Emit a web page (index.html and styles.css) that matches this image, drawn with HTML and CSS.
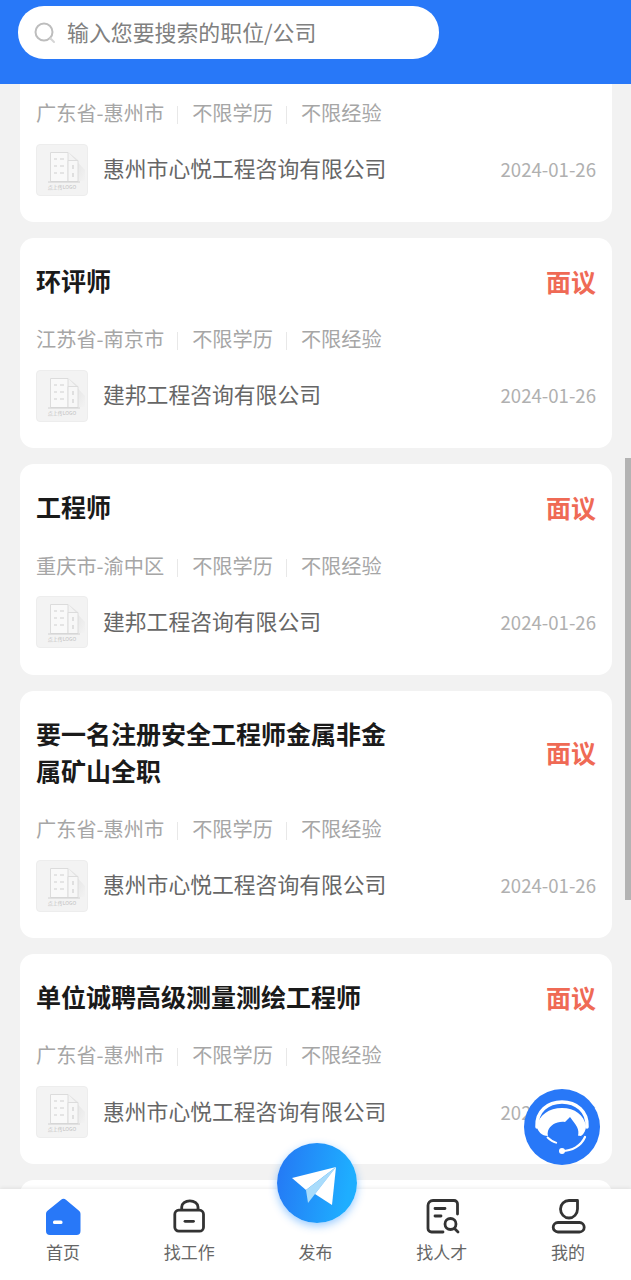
FILE: index.html
```html
<!DOCTYPE html>
<html lang="zh-CN">
<head>
    <meta charset="UTF-8">
    <meta name="viewport" content="width=device-width, initial-scale=1.0">
    <title>招聘</title>
    <link rel="stylesheet" href="styles.css">
</head>
<body>
    <svg class="defs" width="0" height="0">
        <defs>
            <linearGradient id="logo-shade" x1="0" y1="0" x2="1" y2="1">
                <stop offset="0" stop-color="#dcdcdc"/>
                <stop offset="1" stop-color="#f3f3f3"/>
            </linearGradient>
        </defs>
        <symbol id="logo" viewBox="0 0 52 52">
            <path d="M32 8l17 18v11H42V16l-10-8z" fill="url(#logo-shade)"/>
            <path d="M14.500 8.500h17.500v29H14.500z" fill="#f9f9f9" stroke="#dcdcdc"/>
            <path d="M32 16.500h10v21H32z" fill="#f7f7f7" stroke="#dcdcdc"/>
            <path d="M18 15h3M24 15h4M18 22h3M24 22h4M18 29h3M24 29h4M37 21v4M37 29v4" stroke="#cfcfcf" stroke-width="1.200"/>
            <path d="M12 38h32" stroke="#d0d0d0"/>
        </symbol>
    </svg>

    <header class="header">
        <div class="search">
            <svg class="search-icon" width="22" height="22" viewBox="0 0 22 22"><circle cx="10" cy="10" r="8.500" fill="none" stroke="#bdbdbd" stroke-width="2"/><path d="M16.500 16.500l3.500 3.500" stroke="#d5d5d5" stroke-width="2" stroke-linecap="round"/></svg>
            <span class="search-text">输入您要搜索的职位/公司</span>
        </div>
    </header>

    <main class="list">
        <div class="card card-cut">
            <div class="meta"><span>广东省-惠州市</span><span>不限学历</span><span>不限经验</span></div>
            <div class="company">
                <div class="logo"><svg width="50" height="50"><use href="#logo" x="-1" y="-1" width="52" height="52"/></svg><span class="logo-text">点上传LOGO</span></div>
                <span class="company-name">惠州市心悦工程咨询有限公司</span>
                <span class="date">2024-01-26</span>
            </div>
        </div>
        <div class="card">
            <div class="card-top"><h3>环评师</h3><span class="salary">面议</span></div>
            <div class="meta"><span>江苏省-南京市</span><span>不限学历</span><span>不限经验</span></div>
            <div class="company">
                <div class="logo"><svg width="50" height="50"><use href="#logo" x="-1" y="-1" width="52" height="52"/></svg><span class="logo-text">点上传LOGO</span></div>
                <span class="company-name">建邦工程咨询有限公司</span>
                <span class="date">2024-01-26</span>
            </div>
        </div>
        <div class="card">
            <div class="card-top"><h3>工程师</h3><span class="salary">面议</span></div>
            <div class="meta"><span>重庆市-渝中区</span><span>不限学历</span><span>不限经验</span></div>
            <div class="company">
                <div class="logo"><svg width="50" height="50"><use href="#logo" x="-1" y="-1" width="52" height="52"/></svg><span class="logo-text">点上传LOGO</span></div>
                <span class="company-name">建邦工程咨询有限公司</span>
                <span class="date">2024-01-26</span>
            </div>
        </div>
        <div class="card">
            <div class="card-top"><h3>要一名注册安全工程师金属非金属矿山全职</h3><span class="salary">面议</span></div>
            <div class="meta"><span>广东省-惠州市</span><span>不限学历</span><span>不限经验</span></div>
            <div class="company">
                <div class="logo"><svg width="50" height="50"><use href="#logo" x="-1" y="-1" width="52" height="52"/></svg><span class="logo-text">点上传LOGO</span></div>
                <span class="company-name">惠州市心悦工程咨询有限公司</span>
                <span class="date">2024-01-26</span>
            </div>
        </div>
        <div class="card">
            <div class="card-top"><h3>单位诚聘高级测量测绘工程师</h3><span class="salary">面议</span></div>
            <div class="meta"><span>广东省-惠州市</span><span>不限学历</span><span>不限经验</span></div>
            <div class="company">
                <div class="logo"><svg width="50" height="50"><use href="#logo" x="-1" y="-1" width="52" height="52"/></svg><span class="logo-text">点上传LOGO</span></div>
                <span class="company-name">惠州市心悦工程咨询有限公司</span>
                <span class="date">2024-01-26</span>
            </div>
        </div>
        <div class="card"></div>
    </main>

    <nav class="tabbar">
        <div class="tab">
            <svg width="36" height="36" viewBox="0 0 36 36"><path d="M15.800 2a3.800 3.800 0 0 1 5.400 0L34 12.800a4 4 0 0 1 1.500 3V33a4 4 0 0 1-4 4H5a4 4 0 0 1-4-4V15.800a4 4 0 0 1 1.500-3z" fill="#2878f8"/><rect x="8" y="22.500" width="9.500" height="3.500" rx="1.500" fill="#fff"/></svg>
            <span>首页</span>
        </div>
        <div class="tab">
            <svg width="36" height="36" viewBox="0 0 36 36" fill="none" stroke="#333" stroke-width="2.800"><rect x="3.800" y="12.200" width="28.700" height="21" rx="4"/><path d="M10.700 12V9a8.150 6.200 0 0 1 16.300 0V12"/><path d="M14 23.300h8.500" stroke-linecap="round"/></svg>
            <span>找工作</span>
        </div>
        <div class="tab">
            <div class="tab-blank"></div>
            <span>发布</span>
        </div>
        <div class="tab">
            <svg width="36" height="36" viewBox="0 0 36 36" fill="none" stroke="#333" stroke-width="2.800" stroke-linecap="round"><path d="M33.500 16V6a3.500 3.500 0 0 0-3.500-3.500H9A5 5 0 0 0 4 7.500v23A3.500 3.500 0 0 0 7.500 34H19"/><path d="M11 10.500h10M11 18h6"/><circle cx="26.500" cy="26" r="5.500"/><path d="M31 31l3 3"/></svg>
            <span>找人才</span>
        </div>
        <div class="tab">
            <svg width="36" height="36" viewBox="0 0 36 36" fill="none" stroke="#333" stroke-width="2.800"><path d="M19 2.500h8.500V11a8.500 9 0 0 1-17 0A8.500 8.500 0 0 1 19 2.500z" stroke-linejoin="round"/><rect x="3.200" y="24.500" width="31" height="9.500" rx="4.750"/></svg>
            <span>我的</span>
        </div>
    </nav>

    <div class="publish">
        <svg width="50" height="50" viewBox="0 0 50 50"><path d="M0 20L44 9 14 32z" fill="#fff"/><path d="M44 9L14 32l2 13 7-9z" fill="#a9dcfb"/><path d="M44 9L40 47 23 36z" fill="#fff"/></svg>
    </div>

    <div class="service">
        <svg width="62" height="62" viewBox="0 0 62 62">
            <path d="M6 31C5 15 17 6 31 6s26 9 25 25" fill="none" stroke="#fff" stroke-width="3.500" stroke-linecap="round"/>
            <path d="M6 30C8 19 18 12 31 12s22 7 24 18c0 4-2 8-5 10l-7-1-26 1c-6 0-11-5-11-10z" fill="#fff"/>
            <path d="M17 35c2-6 9-10 17-9l5-5c2 3 5 6 7 10 3 6 1 12-4 16-7 5-18 5-23-2-2-3-3-7-2-10z" fill="#2878f8"/>
            <path d="M16 41c3 3 6 5 10 6" fill="none" stroke="#fff" stroke-width="1.800"/>
            <path d="M31 55c10 0 19-5 23-14" fill="none" stroke="#fff" stroke-width="2.200" stroke-linecap="round"/>
            <circle cx="31" cy="55" r="3" fill="#fff"/>
        </svg>
    </div>

    <div class="scrollbar"></div>
</body>
</html>
```

FILE: styles.css
```css
* {
    box-sizing: border-box;
}
html, body {
    margin: 0;
    padding: 0;
}
body {
    position: relative;
    display: flex;
    flex-direction: column;
    width: 631px;
    height: 1280px;
    overflow: hidden;
    background-color: #f2f2f2;
    font-family: "Noto Sans CJK SC", "Noto Sans", sans-serif;
}
.defs {
    position: absolute;
}
.header {
    flex: none;
    height: 84px;
    padding: 6px 0 0 18px;
    background-color: #2878f8;
}
.search {
    display: flex;
    align-items: center;
    width: 421px;
    height: 53px;
    padding-left: 16px;
    border-radius: 26px;
    background: white;
    color: #808080;
    font-size: 21.900px;
}
.search-icon {
    margin-right: 12px;
}
.search-text {
    margin-left: -1px;
    padding-bottom: 3px;
}
.list {
    flex: 1;
    min-height: 0;
    overflow: hidden;
    padding: 0 19px 0 20px;
}
.card {
    margin-bottom: 16px;
    padding: 24px 16px 26.300px 16px;
    border-radius: 14px;
    background: white;
}
.card-cut {
    padding-top: 15px;
    border-radius: 0 0 14px 14px;
}
.card-top {
    display: flex;
    align-items: center;
    justify-content: space-between;
}
h3 {
    width: 352px;
    margin: 0;
    color: #1a1a1a;
    font-size: 25px;
    font-weight: 700;
    line-height: 37.300px;
}
.salary {
    color: #ef6a55;
    font-size: 25px;
    font-weight: 700;
}
.meta {
    display: flex;
    height: 28px;
    margin-top: 26px;
    color: #a6a6a6;
    font-size: 20.200px;
    line-height: 28px;
}
.card-cut .meta {
    margin-top: 0;
}
.meta span {
    position: relative;
    margin-right: 28px;
}
.meta span + span::before {
    content: "";
    position: absolute;
    left: -15px;
    top: 7px;
    width: 1px;
    height: 18px;
    background-color: #e8e8e8;
}
.company {
    display: flex;
    align-items: center;
    margin-top: 16.700px;
}
.logo {
    position: relative;
    flex: none;
    width: 52px;
    height: 52px;
    margin-right: 15px;
    border: 1px solid #ededed;
    border-radius: 4px;
    background-color: #f3f3f3;
}
.logo svg {
    display: block;
}
.logo-text {
    position: absolute;
    left: 0;
    right: 0;
    top: 38px;
    color: #c0c0c0;
    font-size: 5px;
    line-height: 8px;
    text-align: center;
}
.company-name {
    flex: 1;
    padding-bottom: 4px;
    color: #666;
    font-size: 21.800px;
}
.date {
    padding-bottom: 2px;
    color: #b0b0b0;
    font-size: 18.600px;
}
.tabbar {
    flex: none;
    display: grid;
    grid-template-columns: repeat(5, 1fr);
    height: 91px;
    padding-top: 9px;
    background: white;
    box-shadow: 0 -1px 4px rgba(0, 0, 0, 0.08);
    z-index: 1;
}
.tab {
    display: flex;
    flex-direction: column;
    align-items: center;
    color: #666;
    font-size: 17px;
    line-height: 24px;
}
.tab svg, .tab-blank {
    height: 36px;
    margin-bottom: 6px;
    overflow: visible;
}
.publish {
    position: absolute;
    left: 277px;
    top: 1143px;
    z-index: 2;
    display: flex;
    align-items: center;
    justify-content: center;
    width: 80px;
    height: 80px;
    border-radius: 50%;
    background: linear-gradient(100deg, #2576f4, #1eaeff 85%);
    box-shadow: 0 3px 8px rgba(30, 140, 255, 0.45);
}
.service {
    position: absolute;
    left: 524px;
    top: 1089px;
    z-index: 2;
    display: flex;
    align-items: center;
    justify-content: center;
    width: 76px;
    height: 76px;
    border-radius: 50%;
    background-color: #2878f8;
}
.scrollbar {
    position: absolute;
    right: 0;
    top: 458px;
    width: 6px;
    height: 442px;
    background-color: #b3b3b3;
}
```
